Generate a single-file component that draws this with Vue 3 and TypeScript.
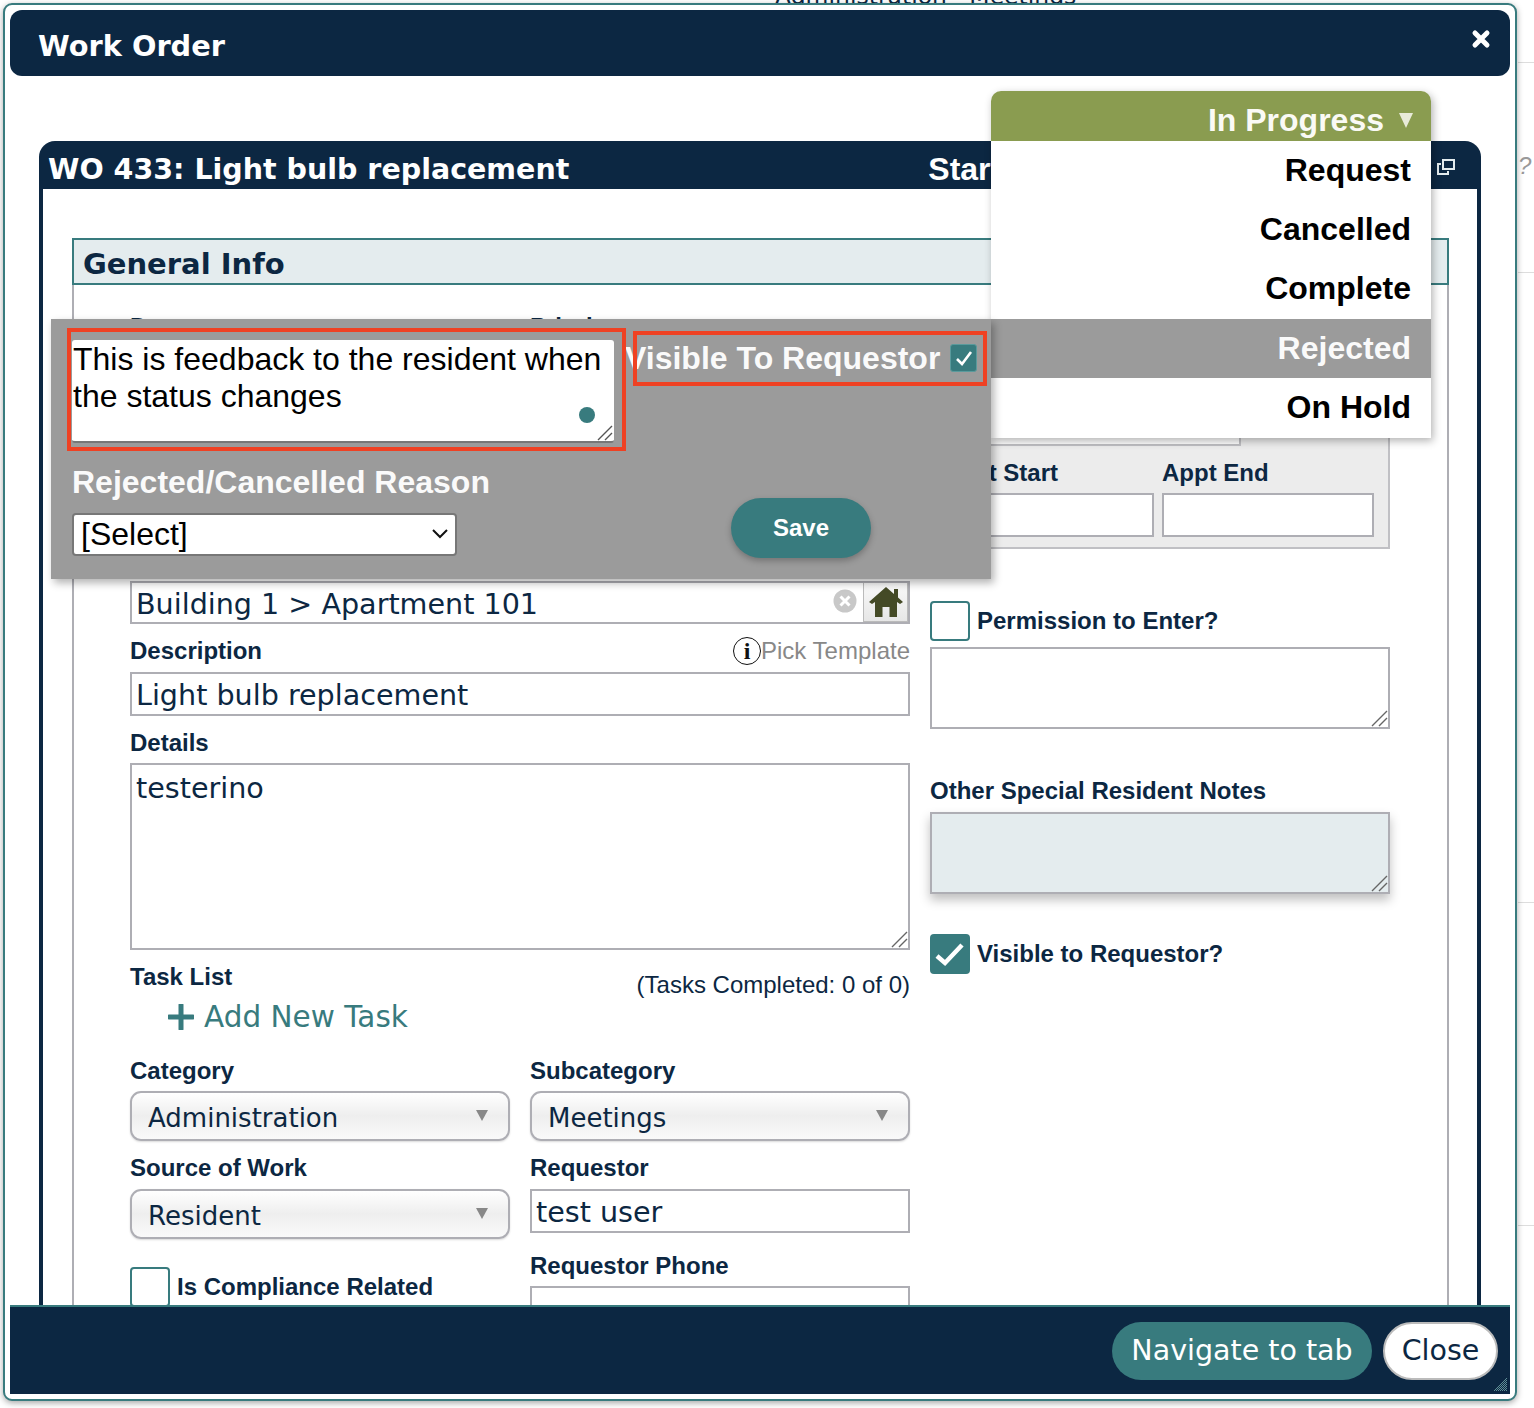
<script setup lang="ts">
interface StatusItem { label: string; active?: boolean }
const statuses: StatusItem[] = [
  { label: 'Request' },
  { label: 'Cancelled' },
  { label: 'Complete' },
  { label: 'Rejected', active: true },
  { label: 'On Hold' },
]
const feedback = 'This is feedback to the resident when the status changes'
</script>

<template>
  <div class="page">
    <div class="bg-text">Administration &nbsp; Meetings</div>
    <div class="bg-mark">? /</div>
    <i class="bg-line l1"></i><i class="bg-line l2"></i><i class="bg-line l3"></i><i class="bg-line l4"></i>

    <section class="modal">
      <header class="modal-head">
        <h1>Work Order</h1>
        <svg class="close-x" viewBox="0 0 20 20" width="20" height="20"><path d="M4 4 L16 16 M16 4 L4 16" stroke="#fff" stroke-width="5" stroke-linecap="round" /></svg>
      </header>

      <div class="modal-body">
        <div class="wo">
          <div class="wo-head">
            <h2>WO 433: Light bulb replacement</h2>
            <span class="start">Start</span>
            <svg class="popout" viewBox="0 0 18 16" width="18" height="16" fill="none" stroke="#e4ecee" stroke-width="2"><rect x="6" y="1" width="11" height="9" /><path d="M4 5H1v10h10v-3" /></svg>
          </div>
          <div class="wo-body">
            <div class="section-title">General Info</div>
            <div class="fieldset">
              <div class="col-left">
                <div class="two top-labels">
                  <label class="lbl">Due</label>
                  <label class="lbl">Priority</label>
                </div>

                <div class="location">
                  <span class="loc-text">Building 1 &gt; Apartment 101</span>
                  <svg class="clear" viewBox="0 0 24 24" width="24" height="24"><circle cx="12" cy="12" r="11.5" fill="#c8c8c8" /><path d="M7.5 7.5l9 9M16.5 7.5l-9 9" stroke="#fff" stroke-width="3" /></svg>
                  <span class="home">
                    <svg viewBox="0 0 34 32" width="34" height="32"><path d="M17 1 L25 8 V3 H29 V11.5 L34 16 L31 18 L28 16 V31 H20.5 V21 H13.5 V31 H6 V16 L3 18 L0 16 Z" fill="#444a26" /></svg>
                  </span>
                </div>

                <div class="desc-row">
                  <label class="lbl">Description</label>
                  <span class="pick"><span class="info">i</span>Pick Template</span>
                </div>
                <div class="text-field desc-input">Light bulb replacement</div>

                <label class="lbl details-lbl">Details</label>
                <div class="text-field details">
                  testerino
                  <svg class="grip" viewBox="0 0 18 18" width="18" height="18"><path d="M17 2L2 17M17 9L9 17" stroke="#666" stroke-width="1.4" /></svg>
                </div>

                <div class="task-row">
                  <label class="lbl">Task List</label>
                  <span class="tasks-done">(Tasks Completed: 0 of 0)</span>
                </div>
                <div class="add-task">
                  <svg viewBox="0 0 26 26" width="26" height="26"><path d="M13 1v24M1 13h24" stroke="#387b7e" stroke-width="5" stroke-linecap="round" /></svg>
                  <span>Add New Task</span>
                </div>

                <div class="two cat-labels">
                  <label class="lbl">Category</label>
                  <label class="lbl">Subcategory</label>
                </div>
                <div class="two cat-selects">
                  <div class="fake-select"><span>Administration</span><i class="tri"></i></div>
                  <div class="fake-select"><span>Meetings</span><i class="tri"></i></div>
                </div>

                <div class="two src-labels">
                  <label class="lbl">Source of Work</label>
                  <label class="lbl">Requestor</label>
                </div>
                <div class="two src-fields">
                  <div class="fake-select"><span>Resident</span><i class="tri"></i></div>
                  <div class="text-field requestor">test user</div>
                </div>

                <div class="two last-row">
                  <div class="check-line compliance">
                    <span class="box"></span>
                    <span class="lbl">Is Compliance Related</span>
                  </div>
                  <div>
                    <label class="lbl">Requestor Phone</label>
                    <div class="text-field phone"></div>
                  </div>
                </div>
              </div>

              <div class="col-right">
                <div class="appt">
                  <div class="appt-wide"></div>
                  <div class="appt-grid">
                    <label class="lbl">Appt Start</label>
                    <label class="lbl">Appt End</label>
                    <div class="appt-input"></div>
                    <div class="appt-input"></div>
                  </div>
                </div>

                <div class="check-line permission">
                  <span class="box"></span>
                  <span class="lbl">Permission to Enter?</span>
                </div>
                <div class="note">
                  <svg class="grip" viewBox="0 0 18 18" width="18" height="18"><path d="M17 2L2 17M17 9L9 17" stroke="#666" stroke-width="1.4" /></svg>
                </div>

                <label class="lbl other-lbl">Other Special Resident Notes</label>
                <div class="note tinted">
                  <svg class="grip" viewBox="0 0 18 18" width="18" height="18"><path d="M17 2L2 17M17 9L9 17" stroke="#666" stroke-width="1.4" /></svg>
                </div>

                <div class="check-line visible">
                  <span class="box on">
                    <svg viewBox="0 0 40 40" width="40" height="40"><path d="M7 22l8 7L32 11" fill="none" stroke="#fff" stroke-width="4.5" /></svg>
                  </span>
                  <span class="lbl">Visible to Requestor?</span>
                </div>
              </div>
            </div>
          </div>
        </div>
      </div>

      <footer class="modal-foot">
        <button class="btn teal" type="button">Navigate to tab</button>
        <button class="btn white" type="button">Close</button>
        <svg class="resize" viewBox="0 0 16 16" width="16" height="16">
          <defs><pattern id="dither" width="2" height="2" patternUnits="userSpaceOnUse"><rect width="1" height="1" fill="#5f8f95" /><rect x="1" y="1" width="1" height="1" fill="#5f8f95" /></pattern></defs>
          <path d="M15 1V15H1Z" fill="url(#dither)" />
        </svg>
      </footer>

      <!-- status dropdown lying over the form -->
      <div class="status">
        <div class="status-head">
          <span>In Progress</span>
          <i class="status-tri"></i>
        </div>
        <ul class="status-list">
          <li v-for="s in statuses" :key="s.label" :class="{ active: s.active }">{{ s.label }}</li>
        </ul>
      </div>

      <!-- status change popup -->
      <div class="popup">
        <div class="popup-top">
          <div class="fb-wrap">
            <textarea class="fb" readonly :value="feedback"></textarea>
            <i class="dot"></i>
            <svg class="fb-grip" viewBox="0 0 16 16" width="16" height="16"><path d="M15 1L1 15M15 8L8 15" stroke="#555" stroke-width="1.4" /></svg>
          </div>
          <div class="vis">
            <span class="vis-text">Visible To Requestor</span>
            <span class="vis-box">
              <svg viewBox="0 0 24 24" width="24" height="24"><path d="M5 13l5 5L19 6" fill="none" stroke="#fff" stroke-width="2.6" /></svg>
            </span>
          </div>
        </div>
        <div class="popup-bottom">
          <div class="reason">
            <div class="reason-lbl">Rejected/Cancelled Reason</div>
            <div class="select-wrap">
              <select class="reason-select"><option>[Select]</option></select>
              <svg class="chev" viewBox="0 0 16 10" width="16" height="10"><path d="M1 1l7 7 7-7" fill="none" stroke="#111" stroke-width="2" /></svg>
            </div>
          </div>
          <button class="save" type="button">Save</button>
        </div>
        <i class="mark m1"></i>
        <i class="mark m2"></i>
      </div>
    </section>
  </div>
</template>

<style>
html, body { margin: 0; background: #fff; }
</style>

<style scoped>
.page {
  position: relative;
  width: 1534px;
  height: 1408px;
  overflow: hidden;
  background: #fff;
  font-family: "Liberation Sans", Arial, sans-serif;
  color: #0c2742;
}
.bg-text {
  position: absolute; left: 775px; top: -18px;
  font: 23.5px/28px "DejaVu Sans", sans-serif; color: #0c2742; white-space: nowrap;
}
.bg-mark { position: absolute; left: 1518px; top: 152px; font: italic 24px/28px "Liberation Sans", sans-serif; color: #999; white-space: nowrap; }
.bg-line { position: absolute; left: 1518px; width: 16px; height: 1px; background: #ddd; }
.l1 { top: 62px; } .l2 { top: 272px; } .l3 { top: 902px; } .l4 { top: 1225px; }

.modal {
  position: absolute; left: 3px; top: 3px;
  box-sizing: border-box;
  width: 1514px; height: 1398px;
  border: 2px solid #387b7e;
  border-radius: 9px;
  padding: 5px;
  background: #fff;
  box-shadow: 0 2px 6px rgba(0,0,0,.35);
  display: flex; flex-direction: column;
}
.modal-head {
  flex: none; box-sizing: border-box; height: 66px; background: #0c2742; border-radius: 12px;
  display: flex; align-items: center; justify-content: space-between;
  padding: 6px 19px 0 28px;
}
.modal-head h1 { margin: 0; font: bold 28.8px/34px "DejaVu Sans", sans-serif; color: #fff; }
.close-x { margin-top: -15px; }

.modal-body { flex: 1; min-height: 0; overflow: hidden; padding: 65px 0 0 29px; }
.wo { width: 1442px; }
.wo-head {
  box-sizing: border-box;
  height: 48px; background: #0c2742; border-radius: 16px 16px 0 0;
  display: flex; align-items: center; padding: 8px 26px 0 9px;
}
.wo-head h2 { margin: 1px 0 0; font: bold 28.5px/40px "DejaVu Sans", sans-serif; color: #fff; white-space: nowrap; }
.start { margin-left: 359px; font: bold 32px/40px "Liberation Sans", sans-serif; color: #fff; }
.popout { margin-left: auto; margin-top: -4px; }
.wo-body {
  box-sizing: border-box; border: solid #0c2742; border-width: 0 4px;
  height: 1200px; padding: 49px 28px 0 29px; background: #fff;
}
.section-title {
  box-sizing: border-box; height: 47px; border: 2px solid #387b7e; background: #e4ecee;
  padding: 1px 0 0 9px; font: bold 29px/46px "DejaVu Sans", sans-serif; color: #0c2742;
}
.fieldset {
  box-sizing: border-box; height: 1100px; border: solid #aeaeb4; border-width: 0 2px;
  padding-left: 56px; display: flex; gap: 20px;
}
.lbl { display: block; font: bold 24px/24px "Liberation Sans", sans-serif; color: #0c2742; white-space: nowrap; }
.col-left { width: 780px; flex: none; }
.col-right { width: 460px; flex: none; }
.two { display: grid; grid-template-columns: 380px 380px; column-gap: 20px; }
.top-labels { padding-top: 30px; height: 296px; box-sizing: border-box; }

.location {
  box-sizing: border-box; height: 43px; border: solid #aeaeb4; border-width: 2px;
  display: flex; align-items: center; padding-left: 4px; overflow: hidden;
}
.loc-text { padding-top: 3px; }
.loc-text, .text-field { font: 28.6px/40px "DejaVu Sans", sans-serif; color: #0c2742; white-space: nowrap; }
.clear { margin-left: auto; margin-right: 6px; margin-top: -3px; }
.home {
  box-sizing: border-box; width: 45px; height: 41px; margin-top: -2px;
  display: flex; align-items: center; justify-content: center;
  background: linear-gradient(#fafafa, #e6e6e6); border: 1px solid #bbb;
}
.desc-row { display: flex; justify-content: space-between; align-items: center; height: 28px; margin-top: 13px; }
.pick { display: flex; align-items: center; font: 24px/28px "Liberation Sans", sans-serif; color: #888; white-space: nowrap; }
.info {
  box-sizing: border-box; width: 28px; height: 28px; border: 1.5px solid #111; border-radius: 50%;
  display: flex; align-items: center; justify-content: center;
  font: bold 24px/24px "Liberation Serif", serif; color: #111;
}
.text-field { box-sizing: border-box; border: 2px solid #aeaeb4; padding: 1px 0 0 4px; background: #fff; }
.desc-input { height: 44px; margin-top: 7px; }
.details-lbl { margin-top: 15px; }
.details { height: 187px; margin-top: 8px; padding-top: 3px; position: relative; }
.task-row { display: flex; justify-content: space-between; margin-top: 15px; height: 24px; }
.tasks-done { font: 24px/24px "Liberation Sans", sans-serif; color: #0c2742; padding-top: 8px; white-space: nowrap; }
.add-task {
  display: flex; align-items: center; gap: 10px; margin: 8px 0 0 38px; height: 40px;
  font: 29.5px/40px "DejaVu Sans", sans-serif; color: #387b7e;
}
.cat-labels { margin-top: 22px; }
.cat-selects { margin-top: 8px; }
.fake-select {
  box-sizing: border-box; height: 50px; border: 2px solid #aeaeb4; border-radius: 11px;
  background: linear-gradient(#fff, #eee 50%, #fafafa);
  display: flex; align-items: center; justify-content: space-between;
  padding: 4px 20px 0 16px;
  font: 26px/40px "DejaVu Sans", sans-serif; color: #0c2742;
  box-shadow: 0 1px 2px rgba(0,0,0,.15);
}
.tri { width: 0; height: 0; border: solid transparent; border-width: 11px 6px 0; border-top-color: #888; margin-top: -5px; }
.src-labels { margin-top: 15px; }
.src-fields { margin-top: 9px; align-items: start; }
.requestor { height: 44px; }
.last-row { margin-top: 15px; }
.check-line { display: flex; align-items: center; gap: 7px; }
.box { box-sizing: border-box; flex: none; width: 40px; height: 40px; border: 2px solid #387b7e; border-radius: 4px; background: #fff; display: block; }
.box.on { background: #387b7e; border: 0; }
.compliance { margin-top: 13px; align-self: start; }
.phone { height: 44px; margin-top: 8px; }

.appt { box-sizing: border-box; height: 159px; margin-top: 105px; background: #ececec; border: 2px solid #c0c0c4; padding: 13px 0 0 10px; }
.appt-wide { box-sizing: border-box; width: 299px; height: 41px; background: #fff; border: 2px solid #c0c0c4; }
.appt-grid { display: grid; grid-template-columns: 212px 212px; column-gap: 8px; margin-top: 15px; }
.appt-input { box-sizing: border-box; height: 44px; background: #fff; border: 2px solid #aeaeb4; margin-top: 8px; }
.permission { margin-top: 52px; }
.note { box-sizing: border-box; height: 82px; border: 2px solid #aeaeb4; margin-top: 6px; position: relative; background: #fff; }
.tinted { background: #e4ecee; margin-top: 9px; box-shadow: 0 6px 10px rgba(0,0,0,.25); }
.grip { position: absolute; right: 0; bottom: 0; }
.other-lbl { margin-top: 50px; }
.visible { margin-top: 40px; }

.modal-foot {
  flex: none; box-sizing: border-box; height: 89px; background: #0c2742; border-top: 2px solid #387b7e;
  display: flex; justify-content: flex-end; align-items: flex-start; gap: 11px;
  padding: 15px 12px 0 0; position: relative;
}
.btn { height: 58px; border-radius: 29px; font: 28.5px/36px "DejaVu Sans", sans-serif; padding: 0; cursor: pointer; }
.btn.teal { width: 260px; background: #387b7e; color: #fff; border: 0; }
.btn.white { width: 115px; background: #fff; color: #0c2742; border: 2px solid #bbb; }
.resize { position: absolute; right: 2px; bottom: 2px; }

.status { position: absolute; left: 986px; top: 86px; width: 440px; box-shadow: 2px 3px 8px rgba(0,0,0,.3); border-radius: 10px 10px 0 0; }
.status-head {
  height: 50px; background: #8a9c50; border-radius: 10px 10px 0 0;
  display: flex; justify-content: flex-end; align-items: center; gap: 15px; padding: 8px 18px 0 0; box-sizing: border-box;
  font: bold 32px/42px "Liberation Sans", sans-serif; color: #fafaf5;
}
.status-tri { width: 0; height: 0; border: solid transparent; border-width: 15px 7px 0; border-top-color: #e8ead8; }
.status-list { list-style: none; margin: 0; padding: 0; background: #fff; }
.status-list li { height: 59px; padding-right: 20px; text-align: right; font: bold 32px/59px "Liberation Sans", sans-serif; color: #000; }
.status-list li:nth-child(3), .status-list li:nth-child(5) { height: 60px; }
.status-list li.active { background: #9b9b9b; color: #fafafa; }

.popup {
  position: absolute; left: 46px; top: 314px; box-sizing: border-box; width: 940px; height: 260px;
  background: #9b9b9b; box-shadow: 3px 4px 8px rgba(0,0,0,.3); padding: 21px 0 0 21px;
}
.popup-top { display: flex; gap: 14px; }
.fb-wrap { position: relative; width: 542px; height: 103px; flex: none; }
.fb {
  display: block; box-sizing: border-box; width: 542px; height: 103px; margin: 0; padding: 1px 0 0 1px;
  border: 0; border-bottom: 2px solid #777; border-radius: 3px; background: #fff; color: #000;
  font: 32px/37px "Liberation Sans", sans-serif; outline: none; resize: none;
}
.dot { position: absolute; left: 507px; top: 67px; width: 16px; height: 16px; border-radius: 50%; background: #387b7e; }
.fb-grip { position: absolute; right: 1px; bottom: 2px; }
.vis { display: flex; align-items: center; height: 36px; margin-left: -3px; gap: 10px; }
.vis-text { font: bold 32px/36px "Liberation Sans", sans-serif; color: #fafafa; white-space: nowrap; }
.vis-box {
  box-sizing: border-box; width: 27px; height: 28px; background: #387b7e; border: 1px solid #5a9a9c; border-radius: 3px;
  display: flex; align-items: center; justify-content: center;
}
.popup-bottom { display: flex; margin-top: 20px; }
.reason { width: 659px; flex: none; }
.reason-lbl { font: bold 32px/38px "Liberation Sans", sans-serif; color: #fafafa; white-space: nowrap; }
.select-wrap { position: relative; width: 385px; margin-top: 12px; }
.reason-select {
  display: block; box-sizing: border-box; width: 385px; height: 43px; padding: 0 0 2px 7px;
  border: 2px solid #777; border-radius: 4px; background: #fff; color: #000;
  font: 32px/38px "Liberation Sans", sans-serif; appearance: none;
}
.chev { position: absolute; right: 9px; top: 16px; pointer-events: none; }
.save {
  width: 140px; height: 60px; margin-top: 35px; border: 0; border-radius: 30px;
  background: #387b7e; color: #fff; font: bold 24px/30px "Liberation Sans", sans-serif;
  box-shadow: 0 3px 6px rgba(0,0,0,.25);
}
.mark { position: absolute; box-sizing: border-box; border: 4px solid #ef4123; display: block; }
.m1 { left: 16px; top: 9px; width: 559px; height: 123px; }
.m2 { left: 582px; top: 12px; width: 354px; height: 55px; }
</style>
